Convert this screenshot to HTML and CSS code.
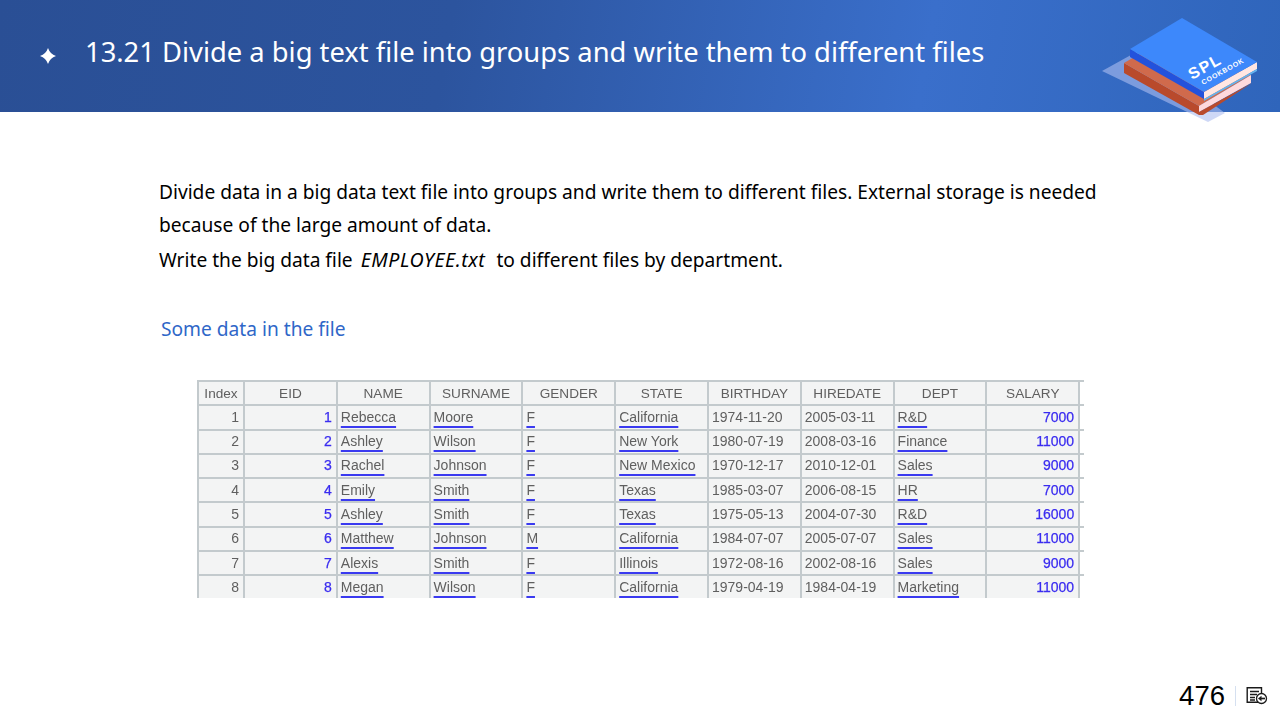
FILE: index.html
```html
<!DOCTYPE html>
<html lang="en">
<head>
<meta charset="utf-8">
<title>13.21 Divide a big text file</title>
<link rel="stylesheet" href="styles.css">
</head>
<body>
<div class="slide">
  <header class="banner">
    <svg class="star" viewBox="0 0 16 16" width="16" height="16"><path d="M8 0Q10 6 16 8Q10 10 8 16Q6 10 0 8Q6 6 8 0Z" fill="#fff"/></svg>
    <h1 class="title">13.21 Divide a big text file into groups and write them to different files</h1>
  </header>
  <svg class="book" viewBox="0 0 180 124" width="180" height="124">
    <polygon points="2,71 40,50 125,113 108,122" fill="#aebef0" fill-opacity="0.6"/>
    <polygon points="24,63 24,73 99,115 99,106" fill="#b94a2c"/>
    <polygon points="24,63 60,42 151,75 99,106" fill="#d06a4c"/>
    <polygon points="99,106 151,75 151,83 99,112" fill="#ffd9dc"/>
    <polygon points="99,112 152,83 103,115 99,115" fill="#b94a2c"/>
    <polygon points="30,49 30,57 104,99 104,92" fill="#2352dc"/>
    <polygon points="104,92 157,62 157,69 104,99" fill="#ffe6e2"/>
    <polygon points="104,99 157,69 157,71 104,101" fill="#63b4f0"/>
    <polygon points="30,49 82,18 157,62 104,92" fill="#3d88fb"/>
    <text class="book-spl" transform="translate(92,80) rotate(-29)">SPL</text>
    <text class="book-sub" transform="translate(103,85) rotate(-29)">COOKBOOK</text>
  </svg>
  <main class="content">
    <p class="intro">Divide data in a big data text file into groups and write them to different files. External storage is needed because of the large amount of data.<br>Write the big data file <em>EMPLOYEE.txt</em>&nbsp; to different files by department.</p>
    <p class="caption">Some data in the file</p>
    <div class="table-clip">
      <table class="grid">
        <thead>
          <tr><th>Index</th><th>EID</th><th>NAME</th><th>SURNAME</th><th>GENDER</th><th>STATE</th><th>BIRTHDAY</th><th>HIREDATE</th><th>DEPT</th><th>SALARY</th><th class="stub"></th></tr>
        </thead>
        <tbody>
          <tr><td class="idx">1</td><td class="num">1</td><td><u>Rebecca</u></td><td><u>Moore</u></td><td><u>F</u></td><td><u>California</u></td><td>1974-11-20</td><td>2005-03-11</td><td><u>R&amp;D</u></td><td class="num">7000</td><td class="stub"></td></tr>
          <tr><td class="idx">2</td><td class="num">2</td><td><u>Ashley</u></td><td><u>Wilson</u></td><td><u>F</u></td><td><u>New York</u></td><td>1980-07-19</td><td>2008-03-16</td><td><u>Finance</u></td><td class="num">11000</td><td class="stub"></td></tr>
          <tr><td class="idx">3</td><td class="num">3</td><td><u>Rachel</u></td><td><u>Johnson</u></td><td><u>F</u></td><td><u>New Mexico</u></td><td>1970-12-17</td><td>2010-12-01</td><td><u>Sales</u></td><td class="num">9000</td><td class="stub"></td></tr>
          <tr><td class="idx">4</td><td class="num">4</td><td><u>Emily</u></td><td><u>Smith</u></td><td><u>F</u></td><td><u>Texas</u></td><td>1985-03-07</td><td>2006-08-15</td><td><u>HR</u></td><td class="num">7000</td><td class="stub"></td></tr>
          <tr><td class="idx">5</td><td class="num">5</td><td><u>Ashley</u></td><td><u>Smith</u></td><td><u>F</u></td><td><u>Texas</u></td><td>1975-05-13</td><td>2004-07-30</td><td><u>R&amp;D</u></td><td class="num">16000</td><td class="stub"></td></tr>
          <tr><td class="idx">6</td><td class="num">6</td><td><u>Matthew</u></td><td><u>Johnson</u></td><td><u>M</u></td><td><u>California</u></td><td>1984-07-07</td><td>2005-07-07</td><td><u>Sales</u></td><td class="num">11000</td><td class="stub"></td></tr>
          <tr><td class="idx">7</td><td class="num">7</td><td><u>Alexis</u></td><td><u>Smith</u></td><td><u>F</u></td><td><u>Illinois</u></td><td>1972-08-16</td><td>2002-08-16</td><td><u>Sales</u></td><td class="num">9000</td><td class="stub"></td></tr>
          <tr><td class="idx">8</td><td class="num">8</td><td><u>Megan</u></td><td><u>Wilson</u></td><td><u>F</u></td><td><u>California</u></td><td>1979-04-19</td><td>1984-04-19</td><td><u>Marketing</u></td><td class="num">11000</td><td class="stub"></td></tr>
        </tbody>
      </table>
    </div>
  </main>
  <footer class="pager">
    <span class="page-no">476</span>
    <span class="sep"></span>
    <svg class="back" viewBox="0 0 22 18" width="22" height="18" fill="none" stroke="#1a1a1a" stroke-width="1.4">
      <path d="M12 15.3H1.2V0.8H15.5V6"/>
      <path d="M4 4.5H13M4 7.5H11M4 10.5H9M4 13H9"/>
      <circle cx="15.5" cy="11.5" r="5" fill="#fff" stroke-width="1.3"/>
      <path d="M19 11.5H14" stroke-width="1.7"/>
      <path d="M15.5 8.8L12 11.5L15.5 14.2Z" fill="#1a1a1a" stroke="none"/>
    </svg>
  </footer>
</div>
</body>
</html>
```
FILE: styles.css
```css
* { box-sizing: border-box; }
html, body { margin: 0; padding: 0; background: #fff; }
.slide {
  position: relative;
  width: 1280px;
  height: 720px;
  overflow: hidden;
  display: flex;
  flex-direction: column;
  font-family: "Noto Sans", "Open Sans", sans-serif;
  color: #000;
}
.banner {
  flex: none;
  height: 112px;
  display: flex;
  align-items: center;
  gap: 29px;
  padding: 0 0 10px 40px;
  background: linear-gradient(100deg, #2a4f95 0%, #2c549e 35%, #3a6fcb 72%, #2f65bb 100%);
}
.star { flex: none; margin-top: 9px; }
.title {
  margin: 0;
  font-size: 27.35px;
  font-weight: 400;
  color: #fff;
  white-space: nowrap;
}
.book { position: absolute; left: 1100px; top: 0; }
.book-spl { font: 700 16px "Liberation Sans", sans-serif; fill: #fff; letter-spacing: 1.5px; }
.book-sub { font: 700 7px "Liberation Sans", sans-serif; fill: #fff; letter-spacing: .7px; }
.content {
  flex: 1;
  min-height: 0;
  padding: 64px 0 0 159px;
}
.intro {
  width: 960px;
  margin: 0;
  font-size: 19.16px;
  line-height: 33.4px;
}
.intro em { margin-left: 3px; letter-spacing: .55px; font-size: 19.6px; margin-right: 1px; }
.caption {
  margin: 39px 0 0 2px;
  font-size: 19.16px;
  line-height: 26px;
  color: #2f67c8;
}
.table-clip {
  width: 887px;
  height: 218px;
  margin: 38px 0 0 38px;
  overflow: hidden;
}
.grid {
  table-layout: fixed;
  width: 886px;
  border-collapse: collapse;
  font-family: "Liberation Sans", Arial, sans-serif;
  font-size: 14px;
  color: #5f5f5f;
  background: #f3f4f4;
  filter: blur(.3px);
}
.grid th, .grid td {
  width: 92.8px;
  height: 24.3px;
  padding: 0 3px 1px;
  border: 2px solid #c3cacd;
  font-weight: 400;
  white-space: nowrap;
  overflow: hidden;
}
.grid th { height: 24px; padding-bottom: 0; text-align: center; font-size: 13.6px; }
.grid th:first-child, .grid td:first-child { width: 46px; }
.grid .stub { width: 5px; padding: 0; background: #fff; border-right: 0; border-bottom: 0; }
.grid .idx { text-align: right; padding-right: 4px; }
.grid .num { text-align: right; padding-right: 4px; color: #3a2cf0; -webkit-text-stroke: .25px #3a2cf0; }
.grid u {
  text-decoration: underline;
  text-decoration-color: #3a3af0;
  text-decoration-thickness: 2px;
  text-underline-offset: 4px;
}
.pager {
  position: absolute;
  right: 12px;
  bottom: 14px;
  display: flex;
  align-items: center;
  gap: 10px;
}
.page-no { font: 400 27.5px "Liberation Sans", Arial, sans-serif; line-height: 18px; }
.sep { width: 1px; height: 20px; background: #d5e0f0; }
```
